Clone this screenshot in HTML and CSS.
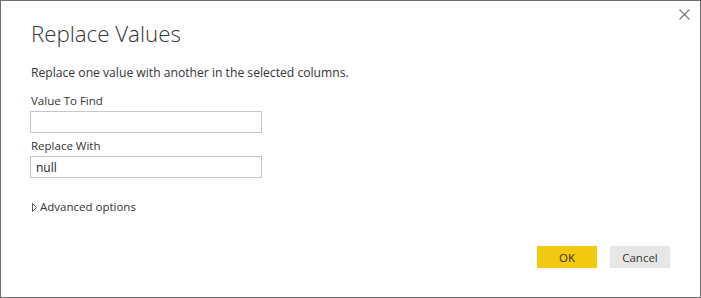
FILE: index.html
```html
<!DOCTYPE html>
<html lang="en">
<head>
    <meta charset="UTF-8">
    <title>Replace Values</title>
    <link rel="stylesheet" href="styles.css">
</head>
<body>
    <div class="dialog">
        <button class="btn-close" aria-label="Close">
            <svg width="11" height="11" viewBox="0 0 11 11">
                <path d="M0.5 0.5 L10.5 10.5 M10.5 0.5 L0.5 10.5" stroke="#777" stroke-width="1.1" fill="none"/>
            </svg>
        </button>

        <h1 class="title">Replace Values</h1>
        <p class="subtitle">Replace one value with another in the selected columns.</p>

        <div class="form-group">
            <label for="find">Value To Find</label>
            <input type="text" id="find">
        </div>
        <div class="form-group">
            <label for="replace">Replace With</label>
            <input type="text" id="replace" value="null">
        </div>

        <div class="advanced">
            <svg width="5" height="9" viewBox="0 0 5 9">
                <path d="M0.5 0.5 L4.5 4.5 L0.5 8.5 Z" stroke="#555" stroke-width="1" fill="none"/>
            </svg>
            <span>Advanced options</span>
        </div>

        <div class="footer">
            <button class="btn btn-ok">OK</button>
            <button class="btn btn-cancel">Cancel</button>
        </div>
    </div>
</body>
</html>
```

FILE: styles.css
```css
/* Reset */
* {
    margin: 0;
    padding: 0;
    box-sizing: border-box;
}

body {
    font-family: 'Open Sans', 'Noto Sans', sans-serif;
    color: #333;
    background: #fff;
}

/* Dialog frame */
.dialog {
    position: relative;
    display: flex;
    flex-direction: column;
    width: 701px;
    height: 298px;
    border: 1px solid #6e6e6e;
    padding: 17px 30px 29px 29px;
}

.btn-close {
    position: absolute;
    top: 8px;
    right: 10px;
    width: 11px;
    height: 11px;
    border: none;
    background: none;
    display: flex;
}

.title {
    font-size: 22.3px;
    font-weight: 300;
    line-height: 32px;
    color: #333;
    padding-left: 1px;
}

.subtitle {
    margin-top: 14px;
    font-size: 12.15px;
    line-height: 18px;
    padding-left: 1px;
}

/* Form */
.form-group {
    display: flex;
    flex-direction: column;
    margin-top: 11px;
}

.form-group + .form-group {
    margin-top: 5px;
}

.form-group label {
    font-size: 11.5px;
    line-height: 16px;
    padding-left: 1px;
    margin-bottom: 2px;
}

.form-group input {
    width: 232px;
    height: 22px;
    border: 1px solid #c6c6c6;
    padding: 0 5px;
    font-family: inherit;
    font-size: 12px;
    color: #222;
    outline: none;
}

.advanced {
    display: flex;
    align-items: center;
    gap: 3px;
    margin-top: 21px;
    padding-left: 2px;
    font-size: 11.5px;
    line-height: 16px;
}

/* Footer buttons */
.footer {
    display: flex;
    justify-content: flex-end;
    gap: 13px;
    margin-top: auto;
}

.btn {
    width: 60px;
    height: 22px;
    border: none;
    font-family: inherit;
    font-size: 11.5px;
    color: #333;
}

.btn-ok {
    background: #f2c811;
}

.btn-cancel {
    background: #e6e6e6;
}
```
